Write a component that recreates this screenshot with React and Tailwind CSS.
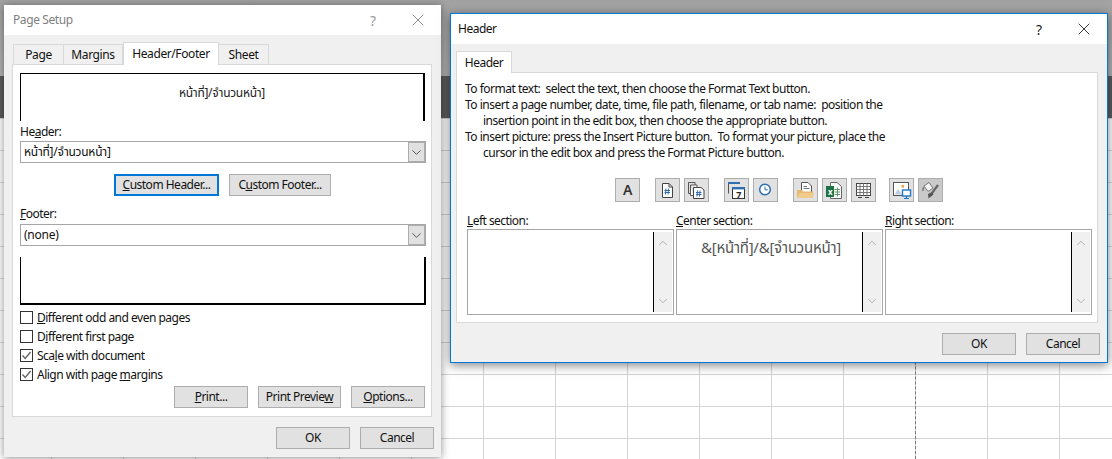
import React from 'react';
import { ChevronDown, ChevronUp, X } from 'lucide-react';

const FONT = "font-['Noto_Sans','Noto_Sans_Thai','Noto_Sans_CJK_SC',sans-serif]";

const Btn = ({ focused, className = '', children }) => (
  <div className={`flex h-[22px] items-center justify-center bg-[#e1e1e1] text-[12px] tracking-[-0.5px] text-[#111] ${focused ? 'border-2 border-[#0078d7]' : 'border border-[#adadad]'} ${className}`}>
    {children}
  </div>
);

const Combo = ({ value }) => (
  <div className="flex h-[22px] w-[406px] items-stretch border border-[#a6a6a6] bg-white">
    <span className="flex flex-1 items-center pl-[3px] text-[12px] tracking-[-0.25px] text-[#111]">{value}</span>
    <span className="flex w-[17px] items-center justify-center border border-[#adadad] bg-[#e1e1e1]">
      <ChevronDown size={15} strokeWidth={1.4} className="text-[#444]" />
    </span>
  </div>
);

const Check = ({ checked, children }) => (
  <div className="flex h-[19px] items-center gap-[4px]">
    <span className="flex h-[13px] w-[13px] items-center justify-center border border-[#333] bg-white">
      {checked && (
        <svg width="11" height="11" viewBox="0 0 11 11" fill="none" stroke="#666" strokeWidth="1.4">
          <path d="M1.5 5.5 L4.2 8.4 L9.6 2" />
        </svg>
      )}
    </span>
    <span className="text-[12px] tracking-[-0.5px] text-[#111]">{children}</span>
  </div>
);

const ToolBtn = ({ disabled, className = '', children }) => (
  <div className={`flex h-[24px] w-[25px] items-center justify-center border border-[#adadad] ${disabled ? 'bg-[#c9c9c9]' : 'bg-[#e1e1e1]'} ${className}`}>
    {children}
  </div>
);

const Ico = ({ children }) => (
  <svg width="23" height="22" viewBox="1 1 23 22" fill="none">{children}</svg>
);

const hash = (x, y) => (
  <path d={`M${x + 1.5} ${y} L${x + 1} ${y + 6} M${x + 4} ${y} L${x + 3.5} ${y + 6} M${x} ${y + 2} H${x + 5.5} M${x} ${y + 4} H${x + 5.5}`} stroke="#2f6fb0" strokeWidth="1" />
);

const IconPage = () => (
  <Ico>
    <path d="M7.5 5.5 H14 L17.5 9 V19.5 H7.5 Z" fill="#fff" stroke="#444" />
    <path d="M14 5.5 V9 H17.5" stroke="#444" />
    {hash(9.5, 10.5)}
  </Ico>
);

const IconPages = () => (
  <Ico>
    <path d="M4.5 4.5 H11 V7 M4.5 4.5 V15.5 H6.5" stroke="#555" />
    <path d="M6.5 7 H13 V9.5 M6.5 7 V17.5 H9" stroke="#555" fill="#fff" />
    <path d="M9.5 9.5 H17 L20 12 V20.5 H9.5 Z" fill="#fff" stroke="#444" />
    {hash(12, 12.5)}
  </Ico>
);

const IconCalendar = () => (
  <Ico>
    <path d="M4.5 15.5 V5 H15" stroke="#555" />
    <rect x="4" y="4" width="12" height="2" fill="#2f6fb0" />
    <rect x="8.5" y="9.5" width="12" height="11" fill="#fff" stroke="#333" />
    <rect x="8" y="9" width="13" height="2.4" fill="#2f6fb0" />
    <text x="14.5" y="19.5" textAnchor="middle" fontSize="9" fontWeight="700" fontFamily="Noto Sans" fill="#222">7</text>
  </Ico>
);

const IconClock = () => (
  <Ico>
    <circle cx="12" cy="11.5" r="5.3" fill="#fff" stroke="#2f6fb0" strokeWidth="1.5" />
    <path d="M12 8.5 V11.8 H14.8" stroke="#2f6fb0" />
  </Ico>
);

const IconFolder = () => (
  <Ico>
    <path d="M8.5 4.5 H15 L18.5 8 V14.5 H8.5 Z" fill="#fff" stroke="#555" />
    <path d="M10.5 8.5 H14 M10.5 10.5 H16.5" stroke="#777" />
    <path d="M4 12 H9 L10 13.5 H20 V20 H4 Z" fill="#e6b870" />
    <path d="M6 15 H21 L19.5 20 H4 Z" fill="#f0cb8c" />
  </Ico>
);

const IconExcel = () => (
  <Ico>
    <path d="M8.5 4.5 H15 L19.5 8.5 V20.5 H8.5 Z" fill="#fff" stroke="#666" />
    <path d="M12.5 11.5 H18 M12.5 14 H18 M12.5 16.5 H18 M15.5 9.5 V18.5" stroke="#5b9a6a" />
    <rect x="4" y="8" width="8" height="11" fill="#1d7145" />
    <text x="8" y="16.5" textAnchor="middle" fontSize="8" fontWeight="700" fontFamily="Noto Sans" fill="#fff">x</text>
  </Ico>
);

const IconTable = () => (
  <Ico>
    <rect x="5.5" y="5.5" width="14" height="12" fill="#fff" stroke="#444" />
    <path d="M5.5 8.5 H19.5 M5.5 11.5 H19.5 M5.5 14.5 H19.5 M9 5.5 V17.5 M12.5 5.5 V17.5 M16 5.5 V17.5" stroke="#777" />
    <path d="M7 19.5 H11 M14 19.5 H18" stroke="#444" />
  </Ico>
);

const IconPicture = () => (
  <Ico>
    <rect x="4.5" y="4.5" width="15" height="13" fill="#fff" stroke="#555" />
    <path d="M5.5 16.5 L9 11 L13 16.5 Z" fill="#b9cfe6" />
    <rect x="12.5" y="7" width="2.6" height="2.6" fill="#f0a94a" />
    <rect x="13.5" y="12" width="8" height="6" fill="#fff" stroke="#1f78c8" strokeWidth="1.4" />
    <path d="M17.5 18 V20 M15 20.5 H20" stroke="#1f78c8" strokeWidth="1.2" />
  </Ico>
);

const IconFormat = () => (
  <Ico>
    <path d="M6 8 L11 4.5 L15 10 L10 13.5 Z" fill="#f4f4f4" stroke="#777" />
    <path d="M6 9 Q4.5 11 5 13" stroke="#777" strokeWidth="1.4" />
    <path d="M20 7 L14 15" stroke="#666" strokeWidth="2.2" />
    <path d="M10 16 L14 14 L15.5 16.5 L10.5 20.5 Z" fill="#555" />
  </Ico>
);

const Section = ({ label, children }) => (
  <div className="flex flex-col">
    <span className="flex h-[27px] items-center pt-[10px] text-[12px] tracking-[-0.55px] text-[#111]">{label}</span>
    <div className="flex h-[86px] items-stretch border border-[#a6a6a6] bg-white py-[2px] pr-[1px]">
      <div className="flex-1 pl-[3px] pt-[5px] text-center text-[15px] leading-[20px] tracking-[-0.25px] text-[#555]">{children}</div>
      <span className="w-px bg-black" />
      <div className="flex w-[18px] flex-col items-center justify-between bg-[#f0f0f0] py-[4px]">
        <ChevronUp size={14} strokeWidth={1.4} className="text-[#a0a0a0]" />
        <ChevronDown size={14} strokeWidth={1.4} className="text-[#a0a0a0]" />
      </div>
    </div>
  </div>
);

function PageSetup() {
  return (
    <div className="absolute left-[4px] top-[5px] flex h-[452px] w-[437px] flex-col bg-[#f0f0f0] shadow-[0_1px_8px_rgba(0,0,0,0.45)]">
      <div className="flex h-[30px] items-center justify-between bg-white pl-[9px] pr-[13px] text-[#808080]">
        <span className="text-[12px] tracking-[-0.4px]">Page Setup</span>
        <span className="flex items-center gap-[32px] text-[#999]">
          <span className="text-[14px]">?</span>
          <X size={20} strokeWidth={1} className="text-[#777]" />
        </span>
      </div>

      <div className="flex h-[29px] items-end pl-[9px] text-[12px] tracking-[-0.4px] text-[#111]">
        <span className="flex h-[20px] w-[51px] items-center justify-center border border-b-0 border-[#d9d9d9] bg-[#f0f0f0]">Page</span>
        <span className="flex h-[20px] w-[59px] items-center justify-center border-y border-r border-b-0 border-[#d9d9d9] bg-[#f0f0f0]">Margins</span>
        <span className="z-10 -mb-px flex h-[23px] w-[96px] items-center justify-center border border-b-0 border-[#d9d9d9] bg-white">Header/Footer</span>
        <span className="flex h-[20px] w-[50px] items-center justify-center border-y border-r border-b-0 border-[#d9d9d9] bg-[#f0f0f0]">Sheet</span>
      </div>

      <div className="mx-[8px] flex h-[353px] w-[420px] flex-col border border-[#d9d9d9] bg-white pl-[7px] pt-[8px]">
        <div className="flex h-[48px] w-[405px] justify-center border-l border-r-2 border-t border-black pt-[10px] text-[12px] leading-[18px] tracking-[-0.3px] text-[#222]">
          หน้าที่]/จำนวนหน้า]
        </div>
        <div className="flex h-[20px] items-end text-[12px] leading-[18px] tracking-[-0.5px] text-[#111]">
          <span>He<u>a</u>der:</span>
        </div>
        <Combo value="หน้าที่]/จำนวนหน้า]" />
        <div className="mt-[11px] flex h-[22px] gap-[10px] pl-[94px]">
          <Btn focused className="w-[105px]"><span><u>C</u>ustom Header...</span></Btn>
          <Btn className="w-[102px]"><span>C<u>u</u>stom Footer...</span></Btn>
        </div>
        <div className="flex h-[28px] items-end text-[12px] leading-[20px] tracking-[-0.5px] text-[#111]">
          <span><u>F</u>ooter:</span>
        </div>
        <Combo value="(none)" />
        <div className="mt-[11px] h-[48px] w-[406px] border-x border-b-2 border-r-2 border-black" />
        <div className="mt-[3px] flex flex-col">
          <Check><u>D</u>ifferent odd and even pages</Check>
          <Check>D<u>i</u>fferent first page</Check>
          <Check checked>Sca<u>l</u>e with document</Check>
          <Check checked>Align with page <u>m</u>argins</Check>
        </div>
        <div className="mt-[2px] flex gap-[10px] pl-[154px]">
          <Btn className="w-[74px]"><span><u>P</u>rint...</span></Btn>
          <Btn className="w-[83px]"><span>Print Previe<u>w</u></span></Btn>
          <Btn className="w-[74px]"><span><u>O</u>ptions...</span></Btn>
        </div>
      </div>

      <div className="mt-[10px] flex justify-end gap-[10px] pr-[7px]">
        <Btn className="w-[74px]">OK</Btn>
        <Btn className="w-[74px]">Cancel</Btn>
      </div>
    </div>
  );
}

function HeaderDialog() {
  return (
    <div className="absolute left-[450px] top-[13px] flex h-[350px] w-[658px] flex-col border border-[#0078d7] bg-[#f0f0f0] shadow-[0_2px_10px_rgba(0,0,0,0.5)]">
      <div className="flex h-[30px] items-center justify-between bg-white pl-[7px] pr-[13px]">
        <span className="text-[12px] tracking-[-0.5px] text-[#111]">Header</span>
        <span className="flex items-center gap-[32px] text-[#222]">
          <span className="text-[14px]">?</span>
          <X size={20} strokeWidth={1} className="text-[#111]" />
        </span>
      </div>

      <div className="flex h-[28px] items-end pl-[5px]">
        <span className="z-10 -mb-px flex h-[22px] w-[56px] items-center justify-center border border-b-0 border-[#d9d9d9] bg-white text-[12px] tracking-[-0.5px] text-[#111]">
          Header
        </span>
      </div>

      <div className="ml-[5px] flex h-[251px] w-[642px] flex-col border border-[#d9d9d9] bg-white pl-[8px] pt-[8px] text-[12px] leading-[16px] tracking-[-0.5px] text-[#111]">
        <p className="whitespace-pre">To format text:  select the text, then choose the Format Text button.</p>
        <p className="whitespace-pre">To insert a page number, date, time, file path, filename, or tab name:  position the</p>
        <p className="whitespace-pre pl-[18px]">insertion point in the edit box, then choose the appropriate button.</p>
        <p className="whitespace-pre">To insert picture: press the Insert Picture button.  To format your picture, place the</p>
        <p className="whitespace-pre pl-[18px]">cursor in the edit box and press the Format Picture button.</p>

        <div className="mt-[17px] flex pl-[150px]">
          <ToolBtn><span className="text-[14px] font-semibold leading-none text-[#333]">A</span></ToolBtn>
          <ToolBtn className="ml-[15px]"><IconPage /></ToolBtn>
          <ToolBtn className="ml-[4px]"><IconPages /></ToolBtn>
          <ToolBtn className="ml-[15px]"><IconCalendar /></ToolBtn>
          <ToolBtn className="ml-[4px]"><IconClock /></ToolBtn>
          <ToolBtn className="ml-[15px]"><IconFolder /></ToolBtn>
          <ToolBtn className="ml-[4px]"><IconExcel /></ToolBtn>
          <ToolBtn className="ml-[4px]"><IconTable /></ToolBtn>
          <ToolBtn className="ml-[13px]"><IconPicture /></ToolBtn>
          <ToolBtn disabled className="ml-[4px]"><IconFormat /></ToolBtn>
        </div>

        <div className="ml-[2px] grid w-[625px] grid-cols-3 gap-x-[2px]">
          <Section label={<span><u>L</u>eft section:</span>} />
          <Section label={<span><u>C</u>enter section:</span>}>&amp;[หน้าที่]/&amp;[จำนวนหน้า]</Section>
          <Section label={<span><u>R</u>ight section:</span>} />
        </div>
      </div>

      <div className="mt-[10px] flex justify-end gap-[10px] pr-[7px]">
        <Btn className="w-[74px]">OK</Btn>
        <Btn className="w-[74px]">Cancel</Btn>
      </div>
    </div>
  );
}

export default function App() {
  return (
    <div className={`relative h-[459px] w-[1112px] overflow-hidden bg-white ${FONT}`}>
      {/* excel window behind the dialogs */}
      <div className="flex h-full flex-col">
        <div className="h-[76px] bg-gradient-to-b from-[#a2a2a2] to-[#b4b4b4]" />
        <div className="h-[42px] bg-[#5c5c5c]" />
        <div className="flex-1 bg-[linear-gradient(#d4d4d4_1px,transparent_1px),linear-gradient(90deg,#d4d4d4_1px,transparent_1px)] bg-[size:72px_32px] bg-[position:51px_0]" />
      </div>
      <div className="absolute bottom-0 left-[915px] top-[118px] border-l border-dashed border-[#777]" />
      <PageSetup />
      <HeaderDialog />
    </div>
  );
}
